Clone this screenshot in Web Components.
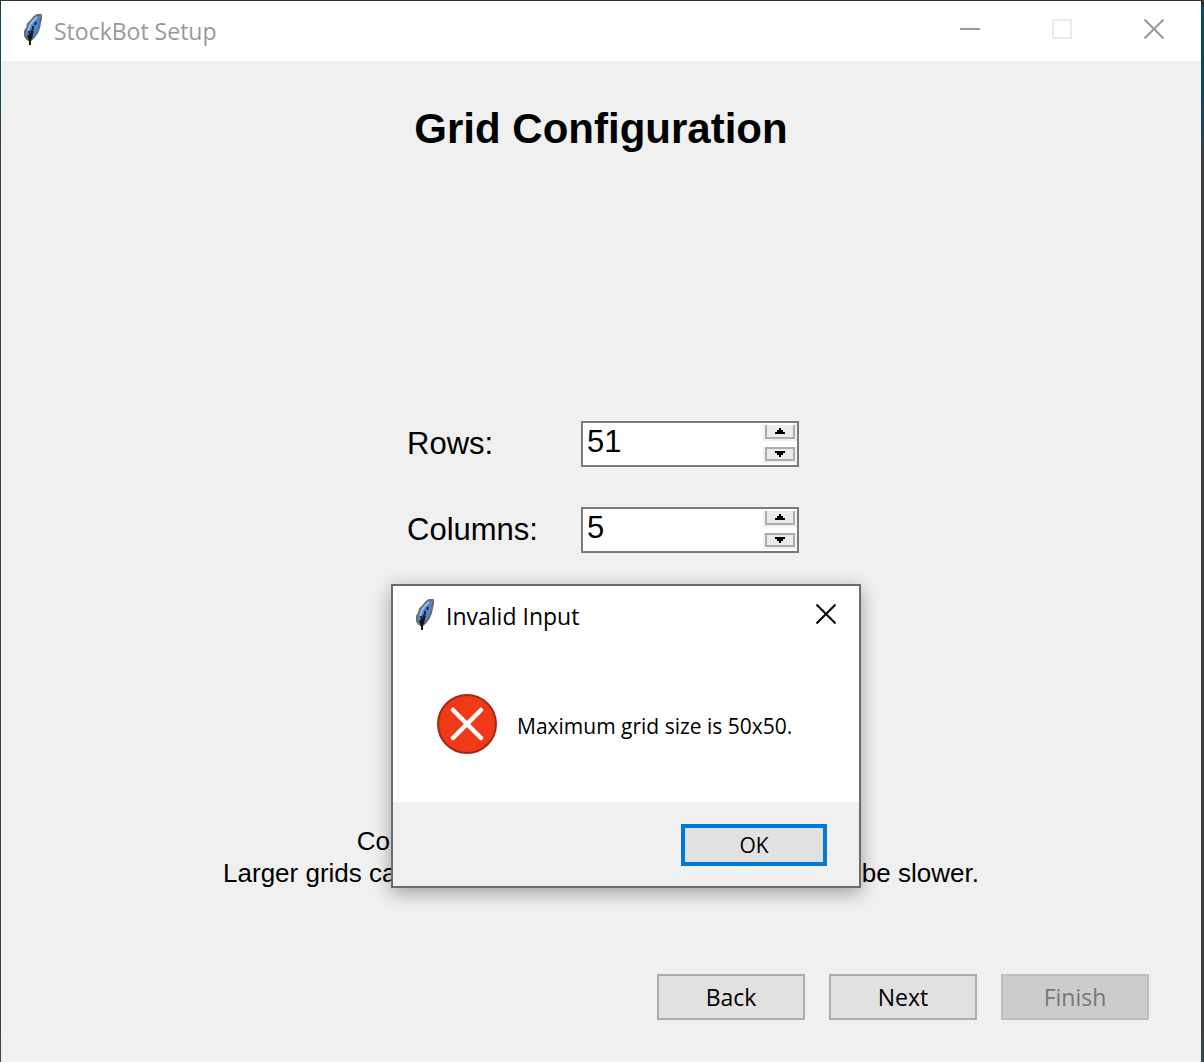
<!DOCTYPE html>
<html lang="en">
<head>
<meta charset="utf-8">
<title>StockBot Setup</title>
<style>
html, body { margin: 0; height: 100%; }
body {
  box-sizing: border-box; min-height: 100vh; display: flex; padding: 1px 3px 0 1px;
  background: linear-gradient(#333 0 6px, #0d4a5e 6px 90px, #404040 160px 97%, #36474d);
  font-family: "Liberation Sans", Arial, sans-serif; color: #000;
}
</style>
</head>
<body>
<setup-window>
  <title-bar slot="bar" caption="StockBot Setup" inactive></title-bar>
  <span slot="heading">Grid Configuration</span>
  <spin-field label="Rows:" value="51"></spin-field>
  <spin-field label="Columns:" value="5"></spin-field>
  <span slot="note">Configure the size of your warehouse grid.<br>Larger grids can represent bigger warehouses but may be slower.</span>
  <push-button slot="actions">Back</push-button>
  <push-button slot="actions">Next</push-button>
  <push-button slot="actions" disabled>Finish</push-button>
  <message-dialog slot="overlay" caption="Invalid Input">Maximum grid size is 50x50.</message-dialog>
</setup-window>

<script>
class FeatherIcon extends HTMLElement {
  connectedCallback() {
    this.attachShadow({ mode: 'open' }).innerHTML = `
      <style>:host{display:block;width:20px;height:32px} svg{display:block}</style>
      <svg width="20" height="32" viewBox="0 0 20 32" aria-hidden="true">
        <path d="M18 1 L14 1 L11 3 L8 7 L5 10 L4 14 L2 17 L2 22 L4 25 L7 27 L11 23 L14 19 L16 14 L17 9 L18 5Z" fill="#4d86cf" stroke="#6a6c6e" stroke-width="2" stroke-linejoin="round"/>
        <path d="M14 3 L10 7 L7 11 L5 17" fill="none" stroke="#94bfe8" stroke-width="2"/>
        <path d="M13 8 L12 11 M10 12 L10 15 L8 18 M6 17 L7 21" fill="none" stroke="#17283c" stroke-width="2"/>
        <path d="M4 22 L7 20 L10 20 L9 25 L6 27Z" fill="#151515"/>
        <path d="M10 17 L7 23 L7 31" fill="none" stroke="#151515" stroke-width="2"/>
      </svg>`;
  }
}

class TitleBar extends HTMLElement {
  connectedCallback() {
    const inactive = this.hasAttribute('inactive');
    this.attachShadow({ mode: 'open' }).innerHTML = `
      <style>
        :host{box-sizing:border-box;display:flex;height:60px;background:#fff;color:#000;align-items:center;font:23px/32px "Open Sans","Segoe UI",sans-serif}
        :host([inactive]){color:#999;padding-right:1px}
        feather-icon{margin:0 11px 2px 22px}
        .caption{flex:1;white-space:nowrap}
        button{width:92px;height:56px;padding:0;margin:0 0 4px;border:0;background:none;color:inherit;display:grid;place-items:center}
        button.close{width:66px}
        :host([inactive]) button.close{width:92px}
        svg{display:block}
      </style>
      <feather-icon></feather-icon><span class="caption">${this.getAttribute('caption')}</span>
      ${inactive ? `
      <button type="button" aria-label="Minimize"><svg width="20" height="20"><path d="M0 10H20" stroke="currentColor" stroke-width="2"/></svg></button>
      <button type="button" aria-label="Maximize" disabled><svg width="20" height="20"><rect x="1" y="1" width="18" height="18" fill="none" stroke="#ebebeb" stroke-width="2"/></svg></button>` : ''}
      <button type="button" class="close" aria-label="Close"><svg width="20" height="20"><path d="M.5 .5L19.5 19.5M19.5 .5L.5 19.5" stroke="currentColor" stroke-width="2"/></svg></button>`;
  }
}

class SpinField extends HTMLElement {
  connectedCallback() {
    this.attachShadow({ mode: 'open' }).innerHTML = `
      <style>
        :host{display:flex;align-items:center;font-size:31px;line-height:36px}
        label{width:174px}
        .box{box-sizing:border-box;display:flex;width:218px;height:46px;border:2px solid #7a7a7a;background:#fff}
        input{flex:1;min-width:0;padding:0 0 2px 4px;height:38px;border:0;outline:0;background:none;font:inherit;color:inherit;appearance:textfield;-moz-appearance:textfield}
        input::-webkit-inner-spin-button{appearance:none;margin:0}
        .arrows{display:flex;flex-direction:column;justify-content:space-between;width:34px;padding:2px 0}
        .arrows span{display:flex;background:#f0f0f0;padding:0 2px 2px}
        button{box-sizing:border-box;flex:1;height:14px;padding:0;border:2px solid #adadad;background:#ebebeb;display:grid;place-items:center}
        .up{height:16px;margin-top:-2px;clip-path:inset(2px 0 0 0)}
        svg{display:block}
      </style>
      <label for="n">${this.getAttribute('label')}</label>
      <div class="box">
        <input id="n" type="number" value="${this.getAttribute('value')}">
        <div class="arrows">
          <span><button type="button" class="up" aria-label="Increase"><svg width="10" height="6" shape-rendering="crispEdges"><path d="M4 0h2v2h2v2h2v2H0V4h2V2h2Z"/></svg></button></span>
          <span><button type="button" aria-label="Decrease"><svg width="10" height="6" shape-rendering="crispEdges"><path d="M0 0h10v2H8v2H6v2H4V4H2V2H0Z"/></svg></button></span>
        </div>
      </div>`;
    const input = this.shadowRoot.querySelector('input');
    const [up, down] = this.shadowRoot.querySelectorAll('button');
    up.onclick = () => input.stepUp();
    down.onclick = () => input.stepDown();
  }
}

class PushButton extends HTMLElement {
  connectedCallback() {
    this.attachShadow({ mode: 'open' }).innerHTML = `
      <style>
        :host{display:block;width:148px;height:46px}
        button{box-sizing:border-box;width:100%;height:100%;padding:0;border:2px solid #adadad;background:#e1e1e1;color:#000;font:23px/32px "Open Sans","Segoe UI",sans-serif}
        button:disabled{border-color:#bfbfbf;background:#ccc;color:#777}
        :host([default]){width:146px;height:42px}
        :host([default]) button{border:4px solid #0078d7;font-size:21px;line-height:32px}
      </style>
      <button type="button" ${this.hasAttribute('disabled') ? 'disabled' : ''}><slot></slot></button>`;
  }
}

class MessageDialog extends HTMLElement {
  connectedCallback() {
    this.attachShadow({ mode: 'open' }).innerHTML = `
      <style>
        :host{box-sizing:border-box;display:block;width:470px;border:2px solid #6b6b6b;background:#fff;box-shadow:0 5px 18px rgba(0,0,0,.34)}
        .body{display:flex;align-items:center;gap:20px;height:156px;padding:0 44px;font:21px/30px "Open Sans","Segoe UI",sans-serif}
        .body svg{flex:none}
        p{margin:0;padding-top:4px;white-space:nowrap}
        footer{display:flex;justify-content:flex-end;padding:22px 32px 20px;background:#f0f0f0}
      </style>
      <div role="alertdialog" aria-label="${this.getAttribute('caption')}">
        <title-bar caption="${this.getAttribute('caption')}"></title-bar>
        <div class="body">
          <svg width="60" height="60" viewBox="0 0 60 60" aria-hidden="true">
            <circle cx="30" cy="30" r="29" fill="#f03a17" stroke="#a52714" stroke-width="2"/>
            <path d="M16 16L44 44M44 16L16 44" stroke="#fff" stroke-width="4.5" stroke-linecap="round"/>
          </svg>
          <p><slot></slot></p>
        </div>
        <footer><push-button default>OK</push-button></footer>
      </div>`;
  }
}

class SetupWindow extends HTMLElement {
  connectedCallback() {
    this.attachShadow({ mode: 'open' }).innerHTML = `
      <style>
        :host{position:relative;flex:1;display:flex;flex-direction:column;background:#f0f0f0;overflow:hidden}
        main{flex:1;display:flex;flex-direction:column;align-items:center;padding:44px 52px 42px}
        h1{margin:0;font-size:42px;line-height:48px}
        .form{flex:1;display:flex;flex-direction:column;justify-content:center;gap:40px;padding:0 0 4px 4px}
        .note{margin:0 0 85px;text-align:center;font-size:26px;line-height:32px;white-space:nowrap}
        .actions{align-self:flex-end;display:flex;gap:24px}
        ::slotted(message-dialog){position:absolute;left:390px;top:583px}
      </style>
      <slot name="bar"></slot>
      <main>
        <h1><slot name="heading"></slot></h1>
        <div class="form"><slot></slot></div>
        <p class="note"><slot name="note"></slot></p>
        <div class="actions"><slot name="actions"></slot></div>
      </main>
      <slot name="overlay"></slot>`;
  }
}

customElements.define('feather-icon', FeatherIcon);
customElements.define('title-bar', TitleBar);
customElements.define('spin-field', SpinField);
customElements.define('push-button', PushButton);
customElements.define('message-dialog', MessageDialog);
customElements.define('setup-window', SetupWindow);
</script>
</body>
</html>
